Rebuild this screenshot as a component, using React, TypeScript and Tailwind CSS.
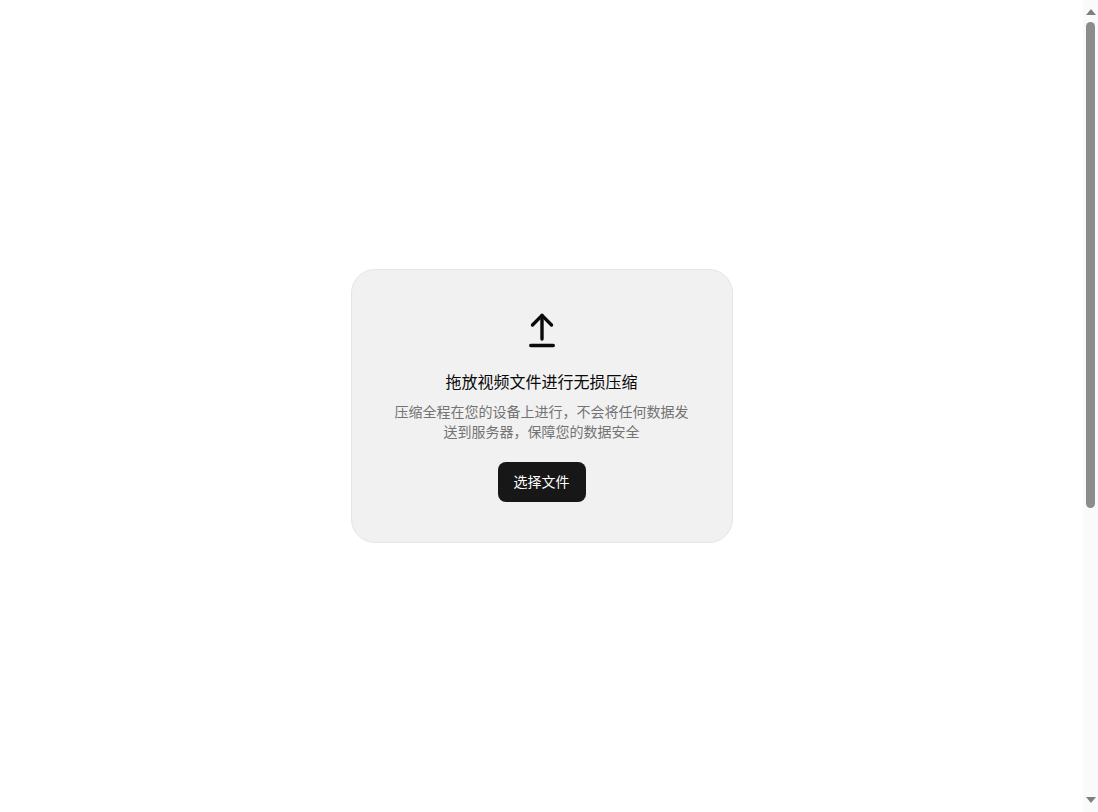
export default function App() {
  return (
    <div className="flex h-[812px] w-full overflow-hidden bg-white font-['Noto_Sans_CJK_SC','Noto_Sans',sans-serif]">
      <main className="flex min-w-0 flex-1 items-center justify-center">
        <section className="flex w-[382px] flex-col items-center rounded-3xl border border-[#e5e5e5] bg-[#f1f1f1] p-10 text-center">
          <svg width="40" height="40" viewBox="0 0 40 40" fill="none" stroke="#0a0a0a" strokeWidth="3.4" strokeLinecap="round" strokeLinejoin="round" aria-hidden="true">
            <path d="M10.5 15 L20 5.4 L29.5 15" />
            <path d="M20 5.4 V29" />
            <path d="M8.7 35.5 H31.3" />
          </svg>
          <h1 className="mt-5 h-6 text-base leading-[22px] font-normal text-[#0a0a0a]">拖放视频文件进行无损压缩</h1>
          <p className="mt-[7px] mb-px text-sm leading-5 text-[#737373]">压缩全程在您的设备上进行，不会将任何数据发送到服务器，保障您的数据安全</p>
          <button type="button" className="mt-5 h-10 rounded-lg bg-[#171717] px-4 pb-0.5 text-sm text-white">选择文件</button>
        </section>
      </main>
      <aside className="flex h-full w-[15px] shrink-0 flex-col items-center bg-[#fafafa]">
        <div className="mt-[9px] h-0 w-0 border-x-[5px] border-b-[6px] border-x-transparent border-b-[#7f7f7f]" />
        <div className="mt-[7px] h-[486px] w-[9px] rounded-full bg-[#8c8c8c]" />
        <div className="flex-1" />
        <div className="mb-[9px] h-0 w-0 border-x-[5px] border-t-[6px] border-x-transparent border-t-[#7f7f7f]" />
      </aside>
    </div>
  );
}
